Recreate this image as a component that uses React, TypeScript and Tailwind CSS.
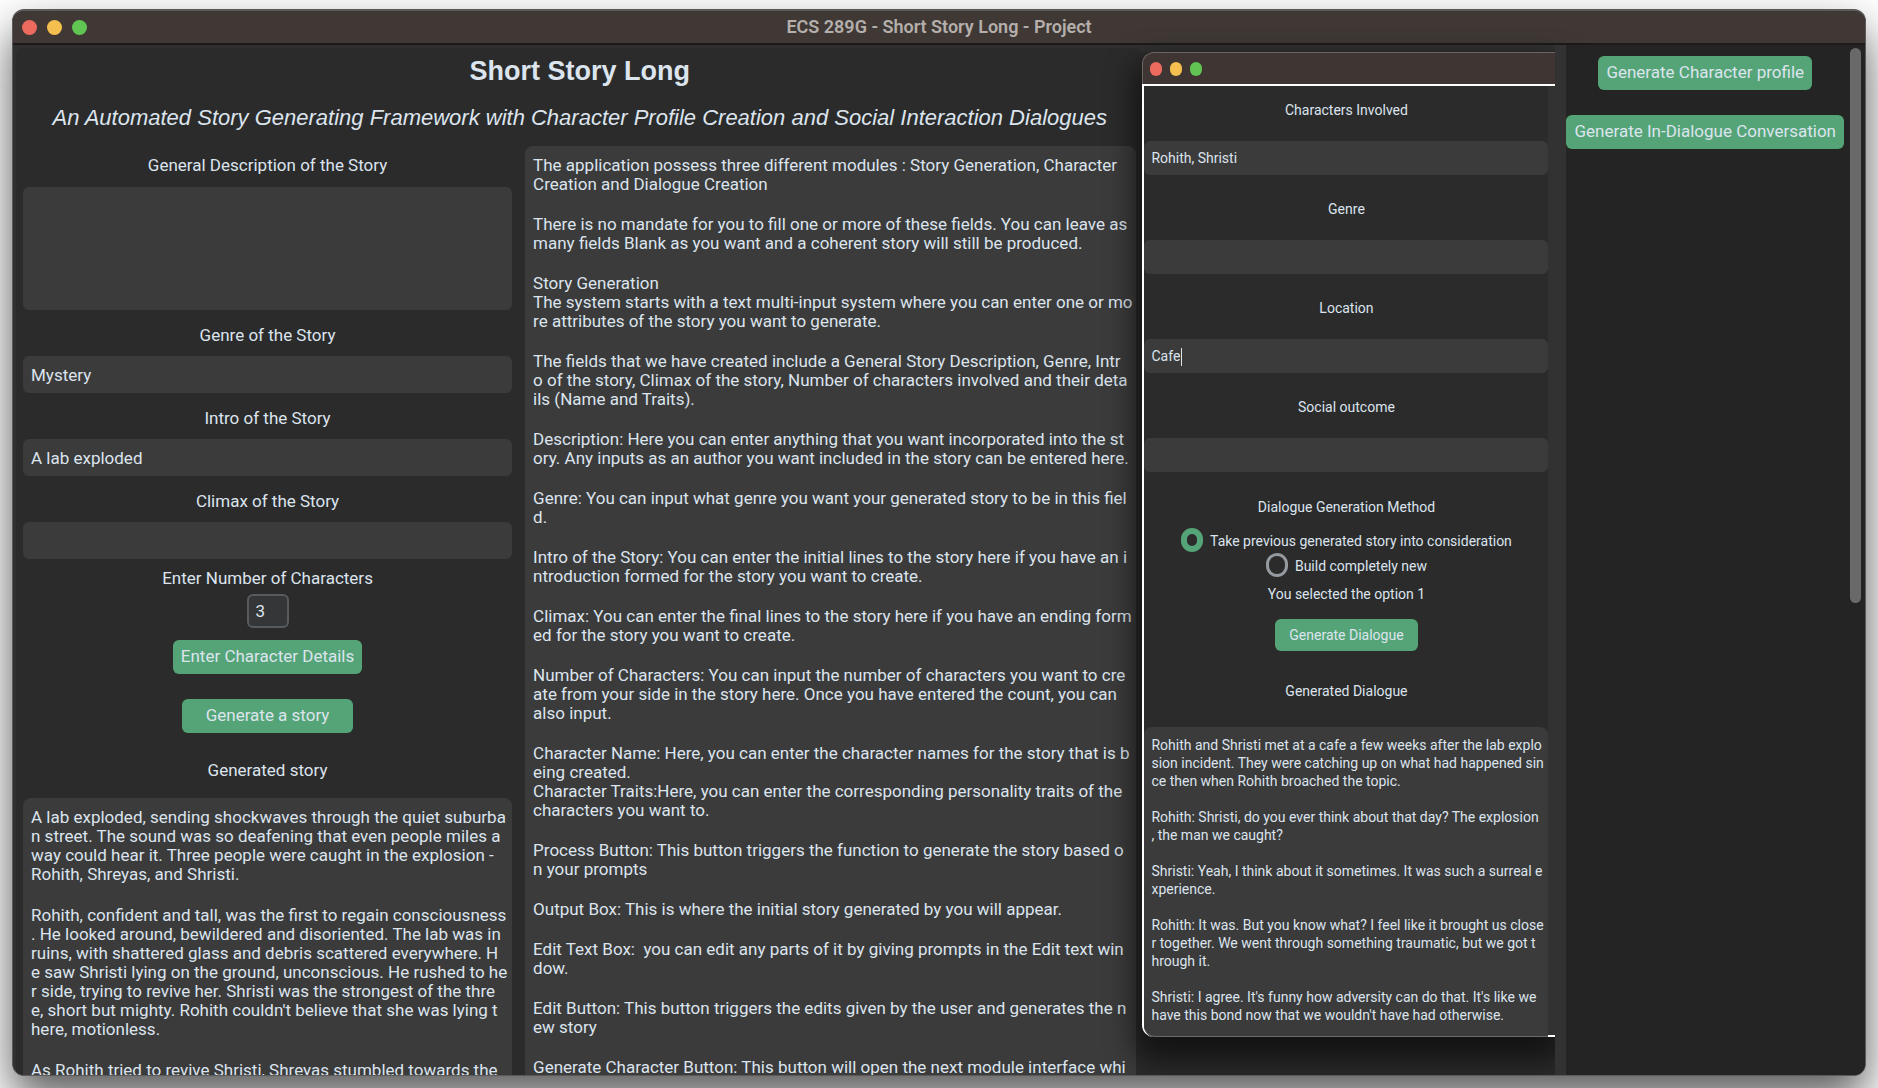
import { type ReactNode } from "react";

const guide = [
  ["The application possess three different modules : Story Generation, Character", "Creation and Dialogue Creation"],
  ["There is no mandate for you to fill one or more of these fields. You can leave as", "many fields Blank as you want and a coherent story will still be produced."],
  ["Story Generation", "The system starts with a text multi-input system where you can enter one or mo", "re attributes of the story you want to generate."],
  ["The fields that we have created include a General Story Description, Genre, Intr", "o of the story, Climax of the story, Number of characters involved and their deta", "ils (Name and Traits)."],
  ["Description: Here you can enter anything that you want incorporated into the st", "ory. Any inputs as an author you want included in the story can be entered here."],
  ["Genre: You can input what genre you want your generated story to be in this fiel", "d."],
  ["Intro of the Story: You can enter the initial lines to the story here if you have an i", "ntroduction formed for the story you want to create."],
  ["Climax: You can enter the final lines to the story here if you have an ending form", "ed for the story you want to create."],
  ["Number of Characters: You can input the number of characters you want to cre", "ate from your side in the story here. Once you have entered the count, you can", "also input."],
  ["Character Name: Here, you can enter the character names for the story that is b", "eing created.", "Character Traits:Here, you can enter the corresponding personality traits of the", "characters you want to."],
  ["Process Button: This button triggers the function to generate the story based o", "n your prompts"],
  ["Output Box: This is where the initial story generated by you will appear."],
  ["Edit Text Box:  you can edit any parts of it by giving prompts in the Edit text win", "dow."],
  ["Edit Button: This button triggers the edits given by the user and generates the n", "ew story"],
  ["Generate Character Button: This button will open the next module interface whi"],
];

const story = [
  ["A lab exploded, sending shockwaves through the quiet suburba", "n street. The sound was so deafening that even people miles a", "way could hear it. Three people were caught in the explosion -", "Rohith, Shreyas, and Shristi."],
  ["Rohith, confident and tall, was the first to regain consciousness", ". He looked around, bewildered and disoriented. The lab was in", "ruins, with shattered glass and debris scattered everywhere. H", "e saw Shristi lying on the ground, unconscious. He rushed to he", "r side, trying to revive her. Shristi was the strongest of the thre", "e, short but mighty. Rohith couldn't believe that she was lying t", "here, motionless."],
  ["As Rohith tried to revive Shristi, Shreyas stumbled towards the"],
];

const dialogue = `Rohith and Shristi met at a cafe a few weeks after the lab explo
sion incident. They were catching up on what had happened sin
ce then when Rohith broached the topic.

Rohith: Shristi, do you ever think about that day? The explosion
, the man we caught?

Shristi: Yeah, I think about it sometimes. It was such a surreal e
xperience.

Rohith: It was. But you know what? I feel like it brought us close
r together. We went through something traumatic, but we got t
hrough it.

Shristi: I agree. It's funny how adversity can do that. It's like we
have this bond now that we wouldn't have had otherwise.`;

function Lights({ small = false }: { small?: boolean }) {
  const dot = small ? "h-[14px] w-[12px] rounded-full" : "size-[15px] rounded-full";
  return (
    <div className={small ? "flex gap-2" : "flex gap-[10px]"}>
      <button type="button" aria-label="Close" className={`${dot} bg-[#ed6a5e]`} />
      <button type="button" aria-label="Minimize" className={`${dot} bg-[#f5bf4f]`} />
      <button type="button" aria-label="Zoom" className={`${dot} bg-[#61c554]`} />
    </div>
  );
}

function TextBox({ label, paragraphs, className }: { label: string; paragraphs: string[][]; className: string }) {
  return (
    <section aria-label={label} className={`min-h-0 flex-col overflow-hidden rounded-t-lg bg-[#3b3b3b] px-2 pt-[10px] leading-[19px] whitespace-pre ${className}`}>
      {paragraphs.map((lines) => (
        <p key={lines[0]}>{lines.join("\n")}</p>
      ))}
    </section>
  );
}

function StoryField({ id, label, value = "" }: { id: string; label: string; value?: string }) {
  return (
    <div className="mt-[13px] flex flex-col gap-[9px]">
      <label htmlFor={id} className="text-center leading-6">{label}</label>
      <input id={id} defaultValue={value} className="h-[37px] w-full rounded-md bg-[#3b3b3b] px-2 outline-none" />
    </div>
  );
}

function DialogField({ id, label, value = "", children }: { id: string; label: string; value?: string; children?: ReactNode }) {
  return (
    <div className="flex flex-col gap-[21px]">
      <label htmlFor={id} className="text-center">{label}</label>
      <div className="relative">
        <input id={id} defaultValue={value} className="block h-[34px] w-full rounded-md bg-[#3b3b3b] px-[7px] outline-none" />
        {children}
      </div>
    </div>
  );
}

const green = "rounded-md bg-[#55a477] whitespace-nowrap";

export default function App() {
  return (
    <div className="h-screen overflow-hidden bg-white px-3 pt-[9px] pb-3 font-['Roboto',sans-serif] text-[17px] text-[#dce4ee]">
      <div className="h-full rounded-xl shadow-[0_22px_45px_rgba(0,0,0,0.65)]">
        <div className="flex h-full flex-col overflow-hidden rounded-xl border border-t-2 border-[#5c5a59] bg-[#303030]">
          <header className="grid h-[34px] shrink-0 grid-cols-[1fr_auto_1fr] items-center border-b-2 border-[#1c1a1a] bg-[#3f3835] px-[9px]">
            <Lights />
            <div className="text-[18px] leading-6 font-semibold text-[#b5afac]">ECS 289G - Short Story Long - Project</div>
          </header>

          <div className="flex min-h-0 flex-1">
            <main className="flex min-w-0 flex-1 flex-col pt-[3px] pl-[3px]">
              <div className="flex min-h-0 flex-1 flex-col rounded-t-lg bg-[#2b2b2b] pt-[7px] pr-[6px] pl-[7px] font-['Liberation_Sans',sans-serif]">
                <h1 className="text-center text-[27px] leading-8 font-bold whitespace-nowrap">Short Story Long</h1>
                <p className="mt-[17px] text-center text-[22px] leading-7 whitespace-nowrap italic">
                  An Automated Story Generating Framework with Character Profile Creation and Social Interaction Dialogues
                </p>

                <div className="mt-[14px] grid min-h-0 flex-1 grid-cols-[minmax(0,4fr)_minmax(0,5fr)] grid-rows-[minmax(0,1fr)] gap-[13px] font-['Roboto',sans-serif]">
                  <form className="flex min-h-0 flex-col pt-[7px]">
                    <label htmlFor="description" className="text-center leading-6">General Description of the Story</label>
                    <textarea id="description" className="mt-[10px] h-[123px] w-full shrink-0 resize-none rounded-md bg-[#3b3b3b] px-2 py-[10px] outline-none" />
                    <StoryField id="genre" label="Genre of the Story" value="Mystery" />
                    <StoryField id="intro" label="Intro of the Story" value="A lab exploded" />
                    <StoryField id="climax" label="Climax of the Story" />
                    <label htmlFor="count" className="mt-[7px] text-center leading-6">Enter Number of Characters</label>
                    <input id="count" defaultValue="3" className="mt-1 h-[34px] w-[42px] shrink-0 self-center rounded-md border-2 border-[#565b5e] bg-[#343638] px-[7px] outline-none" />
                    <button type="button" className={`mt-3 h-[34px] shrink-0 self-center px-2 ${green}`}>Enter Character Details</button>
                    <button type="button" className={`mt-[25px] h-[34px] shrink-0 self-center px-6 ${green}`}>Generate a story</button>
                    <h2 className="mt-[25px] text-center leading-6">Generated story</h2>
                    <TextBox label="Generated story" paragraphs={story} className="mt-4 flex flex-1 gap-[22px]" />
                  </form>
                  <TextBox label="Guide" paragraphs={guide} className="flex gap-[21px]" />
                </div>
              </div>
            </main>

            <div className="flex w-[413px] shrink-0 flex-col bg-[#2b2b2b]">
              <div className="h-[7px] shrink-0 bg-[#303030]" />
              <section aria-label="Dialogue" className="mb-[38px] flex min-h-0 flex-1 flex-col rounded-l-xl text-sm leading-5 shadow-[0_16px_28px_8px_rgba(0,0,0,0.55)]">
                <div className="flex h-8 shrink-0 items-center rounded-tl-xl border-t border-l border-[#6b6462] bg-[#3f3533] px-[7px]">
                  <Lights small />
                </div>
                <div className="flex min-h-0 flex-1 flex-col rounded-bl-xl border-t-2 border-l-2 border-white bg-[#323232]">
                  <form className="mr-[7px] flex min-h-0 flex-1 flex-col rounded-bl-xl bg-[#2b2b2b] pt-[14px]">
                    <div className="flex flex-col gap-6">
                      <DialogField id="characters" label="Characters Involved" value="Rohith, Shristi" />
                      <DialogField id="dialog-genre" label="Genre" />
                      <DialogField id="location" label="Location" value="Cafe">
                        <span className="absolute top-[9px] left-[37px] h-[18px] w-px bg-[#dce4ee]" />
                      </DialogField>
                      <DialogField id="outcome" label="Social outcome" />
                    </div>
                    <fieldset className="mt-[25px] flex flex-col items-center">
                      <legend className="mx-auto">Dialogue Generation Method</legend>
                      <label className="mt-[10px] flex h-[25px] items-center gap-[7px]">
                        <input type="radio" name="method" defaultChecked className="h-6 w-[22px] appearance-none rounded-full border-[6px] border-[#55a477]" />
                        <span className="pt-[3px]">Take previous generated story into consideration</span>
                      </label>
                      <label className="flex h-[25px] items-center gap-[7px]">
                        <input type="radio" name="method" className="h-6 w-[22px] appearance-none rounded-full border-[3px] border-[#949a9f]" />
                        <span className="pt-[3px]">Build completely new</span>
                      </label>
                    </fieldset>
                    <p className="mt-[7px] text-center">You selected the option 1</p>
                    <button type="button" className={`mt-[15px] h-8 shrink-0 self-center px-[14px] ${green}`}>Generate Dialogue</button>
                    <label htmlFor="dialogue" className="mt-[30px] text-center">Generated Dialogue</label>
                    <textarea id="dialogue" readOnly defaultValue={dialogue} className="mt-[26px] min-h-0 w-full flex-1 resize-none overflow-hidden rounded-t-lg rounded-bl-xl border-b border-[#6a6a6a] bg-[#3b3b3b] px-[7px] pt-[9px] leading-[18px] whitespace-pre outline-none" />
                  </form>
                </div>
                <div className="-mt-0.5 h-0.5 w-[7px] self-end bg-white" />
              </section>
            </div>

            <div className="z-10 w-[11px] shrink-0 bg-[#323232]" />

            <aside className="z-10 flex shrink-0 bg-[#242424] pt-[3px] pr-1">
              <div className="flex flex-col items-center gap-[25px] pt-2 pr-[6px]">
                <button type="button" className={`h-[34px] px-2 ${green}`}>Generate Character profile</button>
                <button type="button" className={`h-[34px] px-2 ${green}`}>Generate In-Dialogue Conversation</button>
              </div>
              <div className="h-[54%] w-[11px] rounded-full bg-[#696969]" />
            </aside>
          </div>
        </div>
      </div>
    </div>
  );
}
